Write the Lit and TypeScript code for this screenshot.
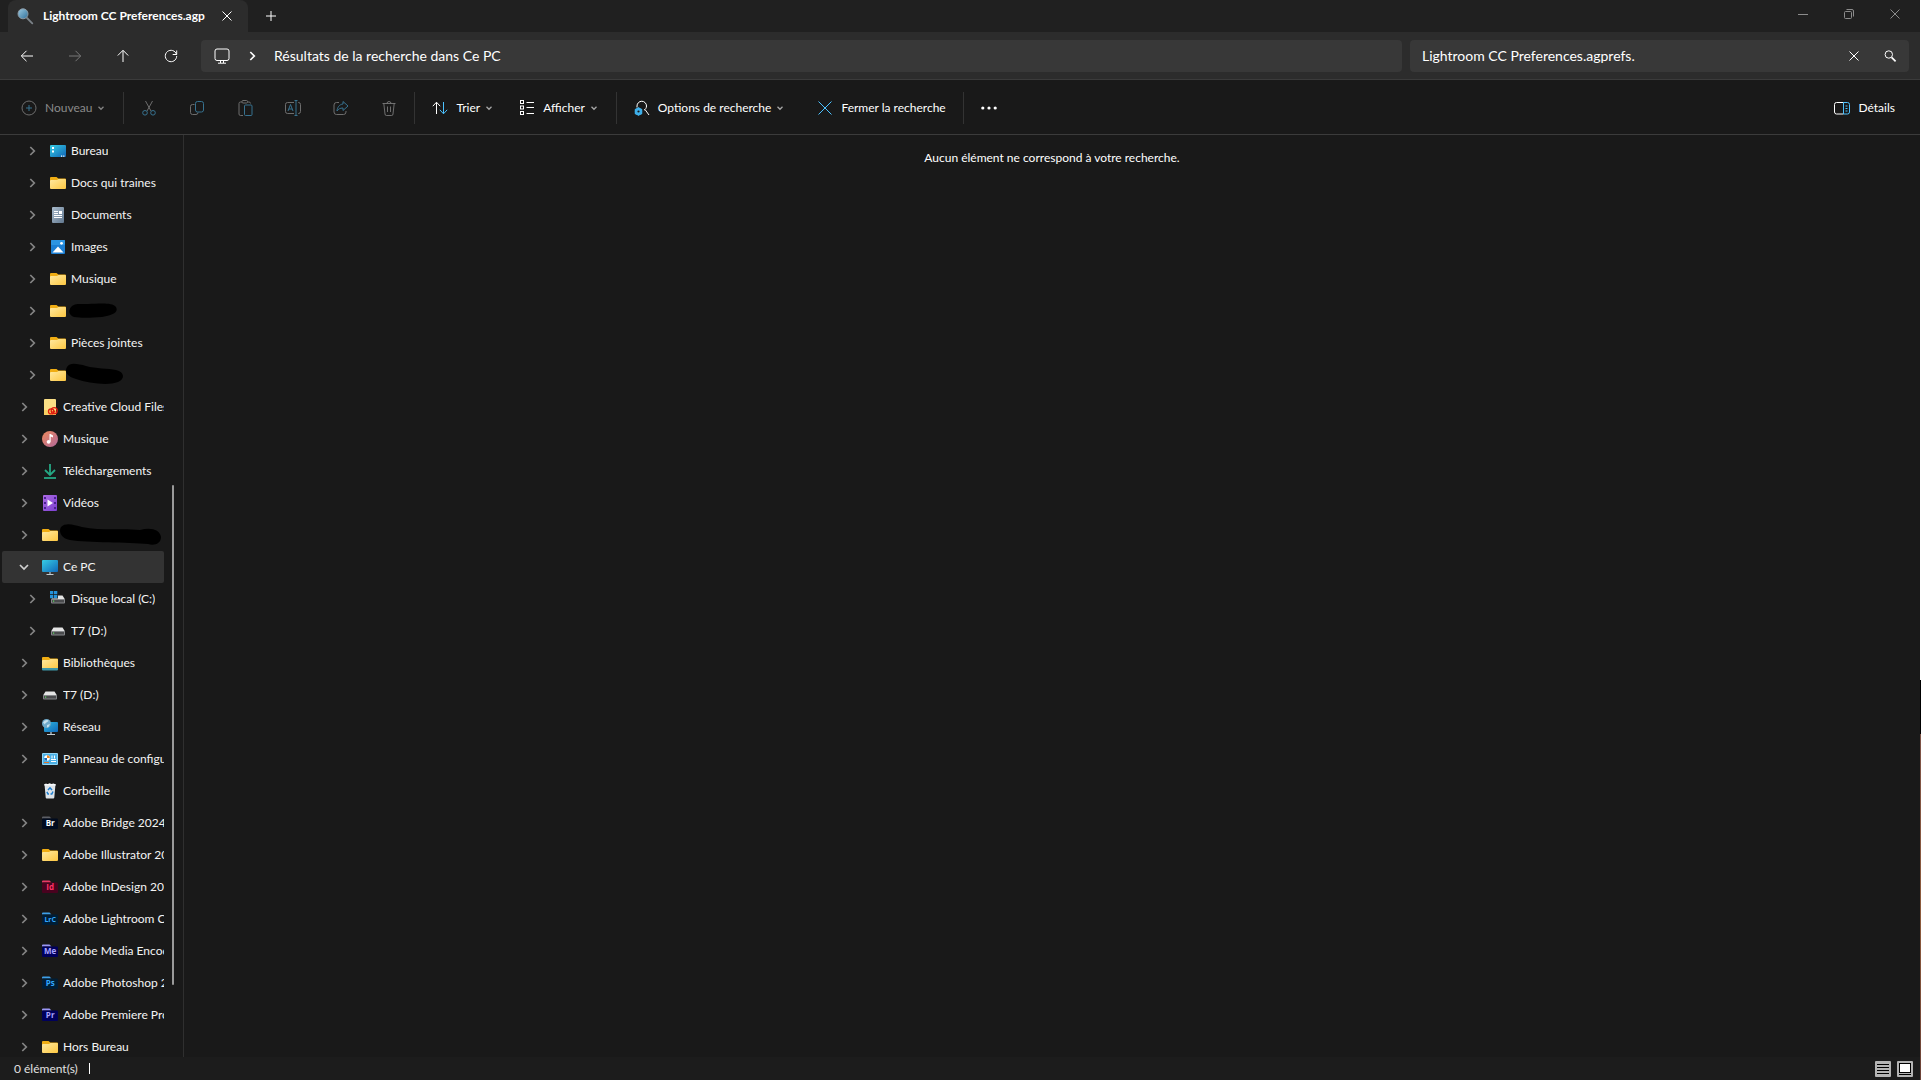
import { LitElement, html, css, svg, nothing, TemplateResult } from "lit";
import { customElement, property } from "lit/decorators.js";

type Art = TemplateResult;

const adobe = (text: string, bg: string, fg: string, tab: string, size = 8): Art => svg`
  <path d="M0 2.500a1 1 0 0 1 1-1h6.500l2 2H0z" fill=${tab}/>
  <rect x="0" y="3.500" width="16" height="10.500" rx="1" fill=${bg}/>
  <text x="8.200" y="11" text-anchor="middle" font-family="Open Sans, sans-serif" font-weight="700" font-size=${size} fill=${fg}>${text}</text>`;

const drive: Art = svg`
  <path d="M3.500 4.500h9l2.500 4h-14z" fill="#e4e4e4"/>
  <rect x="1" y="8" width="14" height="4.500" rx="1" fill="#85878a"/>
  <rect x="2" y="9" width="12" height="2.500" fill="#4a4b4d"/>
  <rect x="3" y="9.500" width="1.200" height="1.200" fill="#5fe05f"/>`;

const folder: Art = svg`
  <path d="M0 3a1 1 0 0 1 1-1h5.500l1.800 1.500H15a1 1 0 0 1 1 1V8H0z" fill="#f0ad13"/>
  <path d="M0 6a1 1 0 0 1 1-1h6l1.500-1H15a1 1 0 0 1 1 1v8a1 1 0 0 1-1 1H1a1 1 0 0 1-1-1z" fill="url(#fold)"/>
  <defs><linearGradient id="fold" x1="0" y1="0" x2="1" y2="1"><stop stop-color="#ffe9a0"/><stop offset="1" stop-color="#fdc741"/></linearGradient></defs>`;

const monitor: Art = svg`
  <defs><linearGradient id="scr" x1="0" y1="0" x2="1" y2="1"><stop stop-color="#37cde4"/><stop offset="1" stop-color="#1068ba"/></linearGradient></defs>
  <rect x="0" y="1" width="16" height="12" rx="1" fill="url(#scr)"/>
  <path d="M7 13h2v2H7z" fill="#7d8b95"/><path d="M4.500 15h7v1h-7z" fill="#c3cbd0"/>`;

const art: Record<string, Art> = {
  folder,
  drive,
  monitor,
  desktop: svg`
    <defs><linearGradient id="desk" x1="0" y1="0" x2="1" y2="1"><stop stop-color="#37cde4"/><stop offset="1" stop-color="#0f64b6"/></linearGradient></defs>
    <rect x="0" y="2" width="16" height="12" rx="1" fill="url(#desk)"/>
    <path d="M2 4h2v2H2zM2 7.500h2v2H2z" fill="#fff"/><path d="M11 12.500h1.200v1.200H11zM13.200 12.500h1.200v1.200h-1.200z" fill="#fff"/>`,
  document: svg`
    <defs><linearGradient id="doc" x1="0" y1="0" x2="1" y2="1"><stop stop-color="#a9bbcc"/><stop offset="1" stop-color="#62788f"/></linearGradient></defs>
    <rect x="2" y="0" width="12" height="16" rx="1" fill="url(#doc)"/>
    <path d="M4 4.500h4M4 6.500h4M4 8.500h8M4 10.500h8" stroke="#fff"/><rect x="9" y="4" width="3" height="3" fill="#fff"/>`,
  image: svg`
    <rect x="1" y="1" width="14" height="14" rx="1" fill="#1c7fd3"/><rect x="1" y="1" width="14" height="5" rx="1" fill="#2c95e2"/>
    <path d="M2.500 13.500 8 7.500l5.500 6z" fill="#fff"/><circle cx="11.500" cy="4.300" r="1.400" fill="#fff"/>`,
  creative: svg`
    <path d="M2 1a1 1 0 0 1 1-1h10a1 1 0 0 1 1 1v15H2z" fill="#fbdf86"/><path d="M2 11h12v5H2z" fill="#f7cf62"/>
    <g fill="none" stroke="#e01c10" stroke-width="1.300">
      <ellipse cx="9.200" cy="12.400" rx="2.700" ry="2.500"/><ellipse cx="12.200" cy="11.700" rx="3" ry="3"/><path d="M9 12.500c1.500.8 3 .8 4-.5"/>
    </g>`,
  music: svg`
    <defs><linearGradient id="mus" x1="0" y1="0" x2="1" y2="1"><stop stop-color="#ee8a5c"/><stop offset="1" stop-color="#b0679b"/></linearGradient></defs>
    <circle cx="8" cy="8" r="8" fill="url(#mus)"/>
    <circle cx="6.600" cy="10.800" r="1.900" fill="#fff"/><path d="M7.500 3h1l2.500 1.500v2L8.700 5.500v5.300H7.500z" fill="#fff"/>`,
  download: svg`<path d="M8 1v10.500M3 7l5 5 5-5" fill="none" stroke="#25a884" stroke-width="1.800"/><path d="M2 15h12" stroke="#25a884" stroke-width="1.800"/>`,
  video: svg`
    <defs><linearGradient id="vid" x1="0" y1="0" x2="1" y2="1"><stop stop-color="#ad6be4"/><stop offset="1" stop-color="#7b3fd0"/></linearGradient></defs>
    <rect x="1" y="0" width="14" height="16" rx="1" fill="url(#vid)"/>
    <path d="M2 2h2v2H2zM2 7h2v2H2zM2 12h2v2H2zM12 2h2v2h-2zM12 7h2v2h-2zM12 12h2v2h-2z" fill="#4a2191"/>
    <path d="M5.500 4.500 11 8l-5.500 3.500z" fill="#fff"/>`,
  system: svg`<path d="M0 0h3.300v3.300H0zM4 0h3.300v3.300H4zM0 4h3.300v3.300H0zM4 4h3.300v3.300H4z" fill="#2592d8"/>
    <path d="M8 4.500h4.500l2.500 4h-14l1-1H8z" fill="#e4e4e4"/><rect x="1" y="8" width="14" height="4.500" rx="1" fill="#85878a"/>
    <rect x="2" y="9" width="12" height="2.500" fill="#4a4b4d"/><rect x="3" y="9.500" width="1.200" height="1.200" fill="#5fe05f"/>`,
  library: svg`${folder}<path d="M0 13h16v1.500a1 1 0 0 1-1 1H1a1 1 0 0 1-1-1z" fill="#3f97a8"/>`,
  network: svg`
    <defs><linearGradient id="net" x1="0" y1="0" x2="1" y2="1"><stop stop-color="#2fb6dc"/><stop offset="1" stop-color="#1068ba"/></linearGradient></defs>
    <rect x="2" y="3" width="14" height="10" rx="1" fill="url(#net)"/>
    <path d="M8 13h2v2H8z" fill="#7d8b95"/><path d="M5 15h8v1H5z" fill="#c3cbd0"/>
    <circle cx="4.500" cy="4.500" r="4.500" fill="#6fa9c9"/><path d="M1 3.500C2.500.800 5.500.500 6.500 1.500 6 3.500 3.500 3 3 5.500z" fill="#c8e2ee"/><path d="M5 6l3-1-1.500 3-1.500.5z" fill="#c8e2ee"/>`,
  panel: svg`
    <rect x="0" y="2" width="16" height="12" rx="1" fill="#8fd5f5"/><rect x="1" y="3" width="14" height="10" fill="#4bb0e6"/>
    <circle cx="5" cy="7" r="2.800" fill="#fff"/><path d="M5 7V4.200A2.800 2.800 0 0 1 7.800 7z" fill="#f08a24"/><path d="M5 7H2.200a2.800 2.800 0 0 0 2.800 2.800z" fill="#1668b4"/>
    <path d="M10 4.500v3M12.500 4.500v3M9 8.500h5M9 10.500h5" stroke="#fff"/><path d="M2 11.500h5" stroke="#e2762a"/>`,
  bin: svg`
    <path d="M2.500 1h11l-1.200 13.500a1 1 0 0 1-1 .9H4.700a1 1 0 0 1-1-.9z" fill="#dde3e8"/><path d="M2.200 1.500 4 .500l1.500.7L7.500.300l2 .8L11.500.400l2.300 1.200v1H2.300z" fill="#f8fafb"/>
    <path d="M6 7l2-2.200L10 7M11 8.500 9.800 11H8.500M7 11H6L4.900 8.800" fill="none" stroke="#1d7fd0" stroke-width="1.500"/>`,
  br: adobe("Br", "#000b1f", "#fff", "#5c5f66"),
  id: adobe("Id", "#49021f", "#ff3366", "#e83a66"),
  lr: adobe("LrC", "#001e36", "#31a8ff", "#3e9fe8", 7),
  me: adobe("Me", "#00005b", "#a9a3ff", "#9a96f5"),
  ps: adobe("Ps", "#001e36", "#31a8ff", "#3e9fe8"),
  pr: adobe("Pr", "#00005b", "#a9a3ff", "#9a96f5"),

  lens: svg`
    <defs><linearGradient id="lens" x1="0" y1="0" x2="1" y2="1"><stop stop-color="#9ccbe2"/><stop offset="1" stop-color="#2f6f9a"/></linearGradient></defs>
    <path d="m10 10 5.300 5.300" stroke="#7b8288" stroke-width="1.800" stroke-linecap="round"/>
    <circle cx="6" cy="5.800" r="5" fill="url(#lens)" stroke="#8b9aa6" stroke-width="1"/>`,
  close: svg`<path d="m3.500 3.500 9 9m0-9-9 9"/>`,
  plus: svg`<path d="M8 3v10M3 8h10"/>`,
  minimize: svg`<path d="M3 8.500h10"/>`,
  restore: svg`<rect x="3.500" y="5.500" width="7" height="7" rx="1"/><path d="M5.500 3.500H11A1.500 1.500 0 0 1 12.500 5v5.500"/>`,
  back: svg`<path d="M14 8H2.500M7.500 2.800 2.300 8l5.200 5.200"/>`,
  forward: svg`<path d="M2 8h11.500M8.500 2.800 13.700 8l-5.200 5.200"/>`,
  up: svg`<path d="M8 14V2.500M2.800 7.500 8 2.300l5.200 5.200"/>`,
  refresh: svg`<path d="M13.500 6.500A5.700 5.700 0 1 0 13.700 8M13.700 2.500v4h-4"/>`,
  pc: svg`<rect x="1" y="1" width="14" height="11.500" rx="2"/><path d="M6.500 12.500v2.500m3-2.500v2.500M4 15.200h8"/>`,
  chevron: svg`<path d="m6.300 4 4 4-4 4"/>`,
  chevronDown: svg`<path d="m4 6 4 4 4-4"/>`,
  search: svg`<circle cx="6.800" cy="6.500" r="3.700"/><path d="m9.600 9.300 4 4" stroke-width="1.700"/>`,
  create: svg`<circle cx="8" cy="8" r="7"/><path class="blue" d="M8 5v6M5 8h6"/>`,
  cut: svg`<path d="M4.500 1 10 11M11.500 1 6 11"/><circle class="blue" cx="4" cy="12.800" r="2.300"/><circle class="blue" cx="12" cy="12.800" r="2.300"/>`,
  copy: svg`<path d="M5.500 4.500H3.500a2 2 0 0 0-2 2v6a2 2 0 0 0 2 2H7a2 2 0 0 0 2-2"/><rect class="blue" x="6.500" y="1.500" width="8" height="10.500" rx="2"/>`,
  paste: svg`<path d="M5 2H3.500a1.500 1.500 0 0 0-1.500 1.500v10.500A1.500 1.500 0 0 0 3.500 15.500H6M10.500 2H12A1.500 1.500 0 0 1 13.500 3.500"/><rect x="5" y=".5" width="5.500" height="2.500" rx="1"/><rect class="blue" x="7.500" y="5" width="7.500" height="10.500" rx="1"/>`,
  rename: svg`<path d="M9 2.500H2.500A2 2 0 0 0 .5 4.500v7a2 2 0 0 0 2 2H9M13 2.500h.5a2 2 0 0 1 2 2v7a2 2 0 0 1-2 2H13"/><path class="blue" d="M11 .5v15M9.500.5h3M9.500 15.500h3M3 11l2.500-6.500L8 11M3.800 9h3.400"/>`,
  share: svg`<path d="M6 2.500H3.500a2.500 2.500 0 0 0-2.500 2.500v7a2.500 2.500 0 0 0 2.500 2.500h7A2.500 2.500 0 0 0 13 12v-1"/><path class="blue" d="M10 1.500 15 6l-5 4.500V8C7 8 5.300 9 4 11 4.200 7.500 6.500 4.300 10 4z"/>`,
  trash: svg`<path d="M1.500 3.500h13M6 3.500a2 2 0 0 1 4 0M2.800 3.500l1.200 10.500a1.500 1.500 0 0 0 1.500 1.500h5A1.500 1.500 0 0 0 12 14l1.200-10.500M6.500 6.500v5.500M9.500 6.500v5.500"/>`,
  sort: svg`<path d="M4.500 14V2.500M.8 6.200l3.700-4 3.700 4"/><path class="blue" d="M11.500 2v11.500M7.800 9.800l3.700 4 3.700-4"/>`,
  view: svg`<rect x="1.500" y=".5" width="3" height="3"/><rect x="1.500" y="6" width="3" height="3"/><rect x="1.500" y="11.500" width="3" height="3"/><path d="M7.500 2.500H15M7.500 7.500H15M7.500 13.500H15"/>`,
  options: svg`<path d="M3 7.500V6A4.700 4.700 0 0 1 12.500 6c0 2-1 3.200-2.500 4.200M11 9.500l4 5.500"/>
    <g class="gear"><circle cx="4.500" cy="11.500" r="3.100"/><path d="M4.500 7.300v8.400M.9 9.400l7.200 4.200M.9 13.600l7.200-4.200"/></g><circle cx="4.500" cy="11.500" r="1.100" fill="#191919" stroke="none"/>`,
  closeBig: svg`<path class="blue" d="m1.500 1.500 13 13m0-13-13 13"/>`,
  dots: svg`<g fill="#fff" stroke="none"><circle cx="1.800" cy="8" r="1.600"/><circle cx="8" cy="8" r="1.600"/><circle cx="14.200" cy="8" r="1.600"/></g>`,
  details: svg`<path d="M9.500 2.500h-7a2 2 0 0 0-2 2v7.500a2 2 0 0 0 2 2h7"/><path class="blue" d="M9.500 2.500h4a2 2 0 0 1 2 2v7.500a2 2 0 0 1-2 2h-4zM11.500 6h2M11.500 8.500h2M11.500 11h2"/>`,
  list: svg`<rect x="0" y="0" width="16" height="16" rx="1" fill="#b4b4b4" stroke="none"/><path d="M2 3.500h12M2 6.500h12M2 9.500h12M2 12.500h12" stroke="#000"/>`,
  thumbs: svg`<rect x="0" y="0" width="16" height="16" rx="1" fill="#b4b4b4" stroke="none"/><rect x="2.500" y="2.500" width="11" height="9" fill="#fff" stroke="#000"/><path d="M2 13.500h12" stroke="#000"/>`,
};

const icon = (name: string, cls = "line") =>
  html`<svg class=${cls} viewBox="0 0 16 16" aria-hidden="true">${art[name]}</svg>`;

const iconStyles = css`
  svg { display: block; flex: none; overflow: visible; width: 16px; height: 16px; }
  .line, .small { fill: none; stroke: currentColor; stroke-width: 1; }
  .small { stroke-width: 1.7; }
  .blue { stroke: #4cc2ff; }
  .gear { fill: #3fb0ea; stroke: #3fb0ea; stroke-width: 1.5; }
  button { font: inherit; color: inherit; background: none; border: 0; padding: 0; margin: 0;
    display: flex; align-items: center; justify-content: center; white-space: nowrap; }
`;

interface Item {
  label: string;
  icon: string;
  level?: number;
  leaf?: boolean;
  open?: boolean;
  mask?: string;
}

const items: Item[] = [
  { label: "Bureau", icon: "desktop", level: 2 },
  { label: "Docs qui traines", icon: "folder", level: 2 },
  { label: "Documents", icon: "document", level: 2 },
  { label: "Images", icon: "image", level: 2 },
  { label: "Musique", icon: "folder", level: 2 },
  { label: "", icon: "folder", level: 2, mask: "M5 12C8 8 14 9 22 9C32 9 46 7 50 12C53 18 46 20 36 22C24 23 14 23 8 22C3 20 2 16 5 12z" },
  { label: "Pièces jointes", icon: "folder", level: 2 },
  { label: "", icon: "folder", level: 2, mask: "M1 8C4 3 12 5 20 7C30 10 42 9 50 11C59 13 59 20 52 23C42 27 22 24 10 20C2 18-2 13 1 8z" },
  { label: "Creative Cloud Files", icon: "creative" },
  { label: "Musique", icon: "music" },
  { label: "Téléchargements", icon: "download" },
  { label: "Vidéos", icon: "video" },
  { label: "", icon: "folder", mask: "M3 8C8 3 16 6 24 8C44 12 66 9 82 11C92 8 102 10 103 18C103 25 96 27 90 25C70 23 30 24 12 21C4 20 0 13 3 8z" },
  { label: "Ce PC", icon: "monitor", open: true },
  { label: "Disque local (C:)", icon: "system", level: 2 },
  { label: "T7 (D:)", icon: "drive", level: 2 },
  { label: "Bibliothèques", icon: "library" },
  { label: "T7 (D:)", icon: "drive" },
  { label: "Réseau", icon: "network" },
  { label: "Panneau de configuration", icon: "panel" },
  { label: "Corbeille", icon: "bin", leaf: true },
  { label: "Adobe Bridge 2024", icon: "br" },
  { label: "Adobe Illustrator 2024", icon: "folder" },
  { label: "Adobe InDesign 2024", icon: "id" },
  { label: "Adobe Lightroom Classic", icon: "lr" },
  { label: "Adobe Media Encoder", icon: "me" },
  { label: "Adobe Photoshop 2024", icon: "ps" },
  { label: "Adobe Premiere Pro", icon: "pr" },
  { label: "Hors Bureau", icon: "folder" },
];

@customElement("folder-row")
class FolderRow extends LitElement {
  @property({ attribute: false }) item!: Item;

  static styles = [iconStyles, css`
    :host { display: block; }
    .row { position: relative; display: flex; align-items: center; height: 32px; margin-left: 2px; padding-left: 12px; border-radius: 2px; }
    .nested { padding-left: 20px; }
    .open { background: #333; }
    .toggle, .spacer { flex: none; width: 20px; height: 20px; margin-right: 8px; color: #858585; }
    .open .toggle { color: #d0d0d0; }
    a { display: flex; align-items: center; gap: 5px; flex: 1; min-width: 0; height: 32px; color: #f4f4f4; text-decoration: none; }
    .label { overflow: hidden; white-space: nowrap; }
    .mask { position: absolute; left: 56px; top: 0; width: 104px; height: 32px; fill: #000; }
    .nested .mask { left: 64px; }
  `];

  render() {
    const { label, icon: name, level = 1, leaf, open, mask } = this.item;
    return html`<div class="row ${level > 1 ? "nested" : ""} ${open ? "open" : ""}">
      ${leaf
        ? html`<span class="spacer"></span>`
        : html`<button class="toggle" aria-label="Développer" aria-expanded=${open ? "true" : "false"}>${icon(open ? "chevronDown" : "chevron", "small")}</button>`}
      <a href="#" aria-label=${label || "Dossier"}>${icon(name, "art")}<span class="label">${label}</span></a>
      ${mask ? html`<svg class="mask" viewBox="0 0 104 32" aria-hidden="true"><path d=${mask}/></svg>` : nothing}
    </div>`;
  }
}

@customElement("tool-button")
class ToolButton extends LitElement {
  @property() icon = "";
  @property() label = "";
  @property() name = "";
  @property({ type: Boolean }) menu = false;
  @property({ type: Boolean }) disabled = false;

  static styles = [iconStyles, css`
    :host { display: block; }
    button { height: 32px; gap: 8px; padding: 0 16px; color: #fff; }
    button:disabled { color: #8a8a8a; }
    button:disabled svg { opacity: 0.75; }
    button:disabled .blue { stroke: #4190b8; }
    .caret { width: 10px; height: 10px; margin-left: -4px; fill: none; stroke: #a8a8a8; stroke-width: 2; }
  `];

  render() {
    return html`<button ?disabled=${this.disabled} aria-label=${this.label || this.name}>
      ${icon(this.icon)}${this.label ? html`<span>${this.label}</span>` : nothing}
      ${this.menu ? icon("chevronDown", "caret") : nothing}
    </button>`;
  }
}

@customElement("app-root")
class AppRoot extends LitElement {
  static styles = [iconStyles, css`
    :host { display: flex; flex-direction: column; box-sizing: border-box; height: 100vh; overflow: hidden; position: relative;
      background: #191919; color: #fff; font: 12px/16px Lato, "Open Sans", sans-serif; border-bottom: 1px solid #fff; padding-right: 1px; }
    .edge { position: absolute; right: 0; top: 0; bottom: 0; width: 1px; background: linear-gradient(#fff 63%, #000 63% 68%, #7d5347 68%, #8d5b3c 85%, #6b4238); }
    .titlebar { display: flex; height: 32px; background: #202020; padding-left: 8px; }
    .tab { display: flex; align-items: center; width: 240px; box-sizing: border-box; padding: 0 13px 0 9px; background: #2c2c2c; border-radius: 8px 8px 0 0; }
    .title { flex: 1; min-width: 0; margin: 0 8px 0 10px; overflow: hidden; white-space: nowrap; font-weight: 700; }
    .add { width: 46px; }
    .window { display: flex; margin: 0 2px 0 auto; color: #8c8c8c; }
    .window button { width: 46px; height: 28px; }
    .navbar { display: flex; align-items: center; height: 47px; background: #2c2c2c; border-bottom: 1px solid #3b3b3b; padding: 0 11px 0 3px; }
    .navbar > button { width: 48px; height: 32px; }
    .navbar > .off { color: #777; }
    .address, .search { display: flex; align-items: center; height: 32px; box-sizing: border-box; background: #383838; border-radius: 4px; font-size: 14px; line-height: 20px; }
    .address { flex: 1188; min-width: 0; margin: 0 8px 0 6px; padding-left: 13px; }
    .crumbs { display: flex; align-items: center; gap: 14px; }
    .search { flex: 486; min-width: 0; padding: 0 1px 0 12px; }
    .search input { flex: 1; min-width: 0; font: inherit; color: inherit; background: none; border: 0; padding: 0; outline: 0; }
    .search button { width: 36px; height: 32px; }
    .hidden { position: absolute; width: 1px; height: 1px; overflow: hidden; clip-path: inset(50%); }
    .toolbar { display: flex; align-items: center; height: 53px; border-bottom: 1px solid #3b3b3b; padding: 1px 9px 0 5px; }
    .rule { width: 1px; height: 32px; margin: 0 1px; background: #333; }
    .sorting { display: flex; gap: 0; }
    .sorting tool-button + tool-button { margin-left: -7px; }
    .end { margin-left: auto; }
    .body { display: flex; flex: 1; min-height: 0; }
    .sidebar { display: flex; flex: none; width: 183px; overflow: hidden; border-right: 1px solid #2f2f2f; }
    .tree { flex: 1; min-width: 0; margin: 0; padding: 0; list-style: none; }
    .track { display: flex; flex-direction: column; align-items: center; width: 18px; padding-right: 1px; }
    .track::before { content: ""; flex: 350; }
    .track::after { content: ""; flex: 72; }
    .thumb { flex: 500; width: 2px; border-radius: 1px; background: #9a9a9a; }
    .results { flex: 1; padding-top: 15px; text-align: center; }
    .results p { margin: 0; }
    .status { display: flex; align-items: center; height: 23px; background: #1c1c1c; padding: 0 7px 0 14px; gap: 11px; color: #e0e0e0; }
    .caret { width: 1px; height: 11px; background: #fff; }
    .views { display: flex; gap: 6px; margin-left: auto; }
  `];

  render() {
    return html`
      <header class="titlebar">
        <div class="tab">${icon("lens", "art")}<span class="title">Lightroom CC Preferences.agp</span><button aria-label="Fermer l’onglet">${icon("close")}</button></div>
        <button class="add" aria-label="Nouvel onglet">${icon("plus")}</button>
        <div class="window">
          <button aria-label="Réduire">${icon("minimize")}</button>
          <button aria-label="Restaurer">${icon("restore")}</button>
          <button aria-label="Fermer">${icon("close")}</button>
        </div>
      </header>
      <nav class="navbar">
        <button aria-label="Précédent">${icon("back")}</button>
        <button class="off" disabled aria-label="Suivant">${icon("forward")}</button>
        <button aria-label="Dossier parent">${icon("up")}</button>
        <button aria-label="Actualiser">${icon("refresh")}</button>
        <div class="address"><div class="crumbs">
          <button aria-label="Ce PC">${icon("pc")}</button>
          <button aria-label="Emplacements">${icon("chevron", "small")}</button>
          <button>Résultats de la recherche dans Ce PC</button>
        </div></div>
        <form class="search" @submit=${(e: Event) => e.preventDefault()}>
          <label class="hidden" for="query">Rechercher</label>
          <input id="query" type="text" .value=${"Lightroom CC Preferences.agprefs."}>
          <button type="reset" aria-label="Effacer">${icon("close")}</button>
          <button type="submit" aria-label="Lancer la recherche">${icon("search")}</button>
        </form>
      </nav>
      <div class="toolbar" role="toolbar" aria-label="Commandes">
        <tool-button icon="create" label="Nouveau" menu disabled></tool-button>
        <span class="rule"></span>
        ${[["cut", "Couper"], ["copy", "Copier"], ["paste", "Coller"], ["rename", "Renommer"], ["share", "Partager"], ["trash", "Supprimer"]].map(
          ([i, n]) => html`<tool-button icon=${i} name=${n} disabled></tool-button>`)}
        <span class="rule"></span>
        <div class="sorting">
          <tool-button icon="sort" label="Trier" menu></tool-button>
          <tool-button icon="view" label="Afficher" menu></tool-button>
        </div>
        <span class="rule"></span>
        <tool-button icon="options" label="Options de recherche" menu></tool-button>
        <tool-button icon="closeBig" label="Fermer la recherche"></tool-button>
        <span class="rule"></span>
        <tool-button icon="dots" name="Plus"></tool-button>
        <tool-button class="end" icon="details" label="Détails"></tool-button>
      </div>
      <div class="body">
        <nav class="sidebar" aria-label="Dossiers">
          <ul class="tree">${items.map((item) => html`<li><folder-row .item=${item}></folder-row></li>`)}</ul>
          <div class="track"><div class="thumb"></div></div>
        </nav>
        <main class="results"><p>Aucun élément ne correspond à votre recherche.</p></main>
      </div>
      <footer class="status">
        <span>0 élément(s)</span><span class="caret"></span>
        <div class="views"><button aria-label="Liste">${icon("list")}</button><button aria-label="Vignettes">${icon("thumbs")}</button></div>
      </footer>
      <div class="edge"></div>`;
  }
}
